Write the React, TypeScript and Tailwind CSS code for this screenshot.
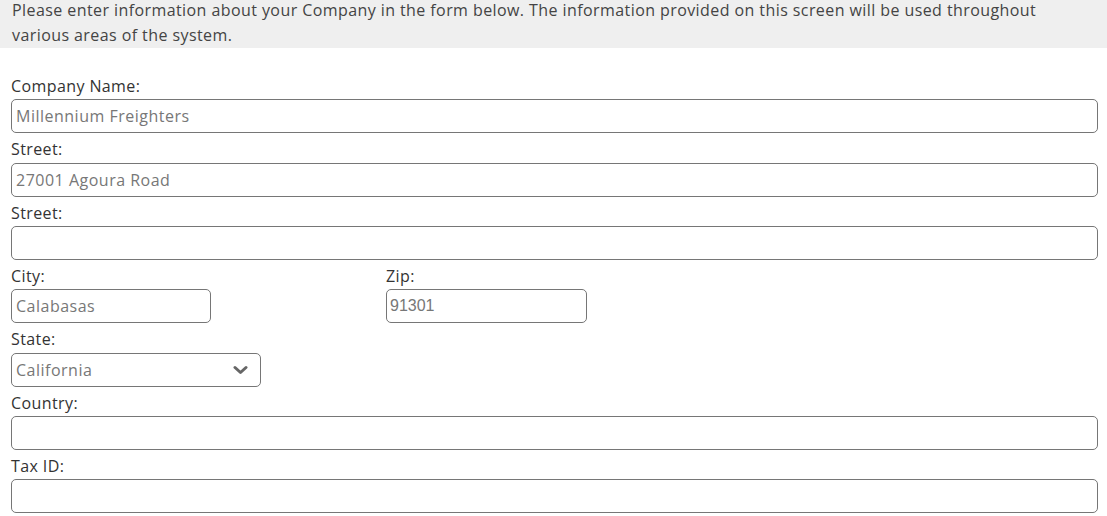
const font = { fontFamily: '"Open Sans", "Liberation Sans", sans-serif' };

function Field({
  label,
  value,
  width,
  mono,
}: {
  label: string;
  value?: string;
  width?: string;
  mono?: boolean;
}) {
  return (
    <div className={width ?? "w-full"}>
      <div className="h-[29.33px] pt-[6px] text-[16px] leading-[20px] tracking-[0.4px] text-[#333]">{label}</div>
      <div
        className={`flex h-[34px] items-center rounded-[5px] border border-[#767676] text-[#777] ${
          mono ? "pl-[3px] text-[16px] tracking-normal" : "pl-[4px] text-[16px] tracking-[0.5px]"
        }`}
        style={mono ? { fontFamily: '"Liberation Sans", Arial, sans-serif' } : undefined}
      >
        {value}
      </div>
    </div>
  );
}

export default function App() {
  return (
    <div className="min-h-screen bg-white" style={font}>
      <div className="h-[48px] overflow-hidden bg-[#efefef] pl-[12px] text-[16px] leading-[25px] tracking-[0.42px] text-[#444]">
        <div className="relative -top-[2px]">
          Please enter information about your Company in the form below. The information provided on this screen will be used throughout
          <br />
          various areas of the system.
        </div>
      </div>

      <div className="mt-[22px] pl-[11px] pr-[9px]">
        <Field label="Company Name:" value="Millennium Freighters" />
        <Field label="Street:" value="27001 Agoura Road" />
        <Field label="Street:" />
        <div className="flex">
          <Field label="City:" value="Calabasas" width="w-[200px]" />
          <div className="ml-[175px]">
            <Field label="Zip:" value="91301" width="w-[201px]" mono />
          </div>
        </div>
        <div className="w-[250px]">
          <div className="h-[29.33px] pt-[6px] text-[16px] leading-[20px] tracking-[0.4px] text-[#333]">State:</div>
          <div className="flex h-[34px] items-center justify-between rounded-[5px] border border-[#767676] pl-[4px] pr-[12px] text-[16px] tracking-[0.5px] text-[#777]">
            <span>California</span>
            <svg width="15" height="10" viewBox="0 0 15 10" fill="none">
              <path d="M2 2.5 L7.5 7.5 L13 2.5" stroke="#666" strokeWidth="3" strokeLinecap="round" strokeLinejoin="round" />
            </svg>
          </div>
        </div>
        <Field label="Country:" />
        <Field label="Tax ID:" />
      </div>
    </div>
  );
}
